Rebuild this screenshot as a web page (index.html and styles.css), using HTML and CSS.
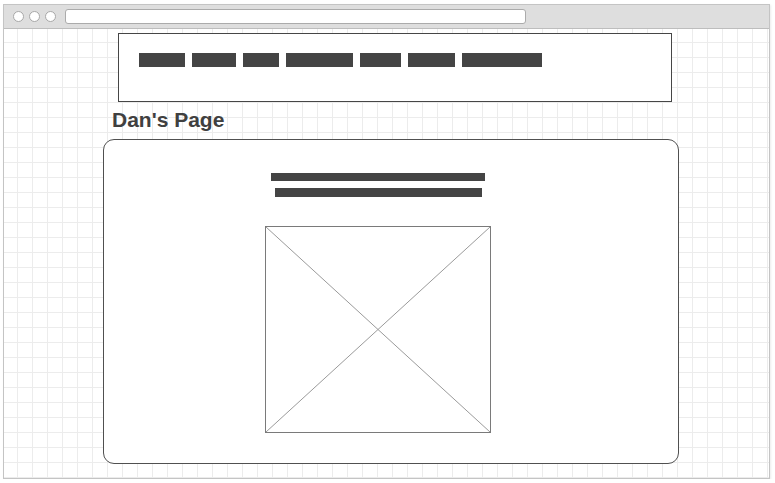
FILE: index.html
```html
<!DOCTYPE html>
<html>
<head>
<meta charset="utf-8">
<title>Dan's Page</title>
<link rel="stylesheet" href="styles.css">
</head>
<body>
<div class="frame">
  <div class="toolbar">
    <span class="dot"></span><span class="dot"></span><span class="dot"></span>
    <span class="address"></span>
  </div>
  <div class="content">
    <nav class="nav">
      <span class="nav-item w1"></span>
      <span class="nav-item w2"></span>
      <span class="nav-item w3"></span>
      <span class="nav-item w4"></span>
      <span class="nav-item w5"></span>
      <span class="nav-item w6"></span>
      <span class="nav-item w7"></span>
    </nav>
    <h1 class="title">Dan's Page</h1>
    <div class="card">
      <div class="column">
        <div class="bar bar1"></div>
        <div class="bar bar2"></div>
        <div class="image">
          <svg width="224" height="205" viewBox="0 0 224 205" preserveAspectRatio="none">
            <line x1="0" y1="0" x2="224" y2="205" stroke="#9a9a9a" stroke-width="1"/>
            <line x1="224" y1="0" x2="0" y2="205" stroke="#9a9a9a" stroke-width="1"/>
          </svg>
        </div>
      </div>
    </div>
  </div>
</div>
</body>
</html>
```

FILE: styles.css
```css
html, body {
  margin: 0;
  padding: 0;
  background: #ffffff;
}
body {
  font-family: "Liberation Sans", Arial, sans-serif;
  padding-top: 4px;
  padding-left: 3px;
}
.frame {
  width: 765px;
  height: 473px;
  border: 1px solid #c4c4c4;
  box-shadow: 1px 1px 2px rgba(0,0,0,0.08);
  display: flex;
  flex-direction: column;
  background: #fff;
}
.toolbar {
  height: 23px;
  background: #dedede;
  border-bottom: 1px solid #bdbdbd;
  display: flex;
  align-items: center;
  padding-left: 9px;
  gap: 5px;
  flex: none;
}
.dot {
  width: 9px;
  height: 9px;
  border: 1px solid #a8a8a8;
  border-radius: 50%;
  background: #fff;
  flex: none;
}
.address {
  margin-left: 4px;
  width: 459px;
  height: 13px;
  border: 1px solid #ababab;
  border-radius: 3px;
  background: #fff;
}
.content {
  flex: 1;
  background-color: #fff;
  background-image:
    linear-gradient(to right, #ececec 1px, transparent 1px),
    linear-gradient(to bottom, #ececec 1px, transparent 1px);
  background-size: 15px 15px;
  background-position: 13px 13px;
  padding-top: 4px;
}
.nav {
  margin-left: 114px;
  border: 1px solid #464646;
  background: #fff;
  display: flex;
  gap: 7px;
  padding: 19px 0 0 20px;
  box-sizing: border-box;
  height: 69px;
  width: 554px;
  align-items: flex-start;
}
.nav-item {
  height: 14px;
  background: #444;
  display: block;
}
.w1 { width: 46px; }
.w2 { width: 44px; }
.w3 { width: 36px; }
.w4 { width: 67px; }
.w5 { width: 41px; }
.w6 { width: 47px; }
.w7 { width: 80px; }
.title {
  margin: 6px 0 0 108px;
  font-size: 21px;
  line-height: 24px;
  font-weight: bold;
  color: #404040;
}
.card {
  margin: 7px 0 0 99px;
  width: 574px;
  height: 323px;
  border: 1px solid #505050;
  border-radius: 11px;
  background: #fff;
}
.column {
  margin-left: 161px;
  padding-top: 33px;
  width: 226px;
  display: flex;
  flex-direction: column;
  align-items: flex-start;
}
.bar {
  height: 8px;
  background: #444;
}
.bar1 {
  width: 214px;
  margin-left: 6px;
}
.bar2 {
  width: 207px;
  margin-left: 10px;
  margin-top: 7px;
  height: 9px;
}
.image {
  margin-top: 29px;
  width: 224px;
  height: 205px;
  border: 1px solid #7a7a7a;
  background: #fff;
}
.image svg {
  display: block;
}
```
